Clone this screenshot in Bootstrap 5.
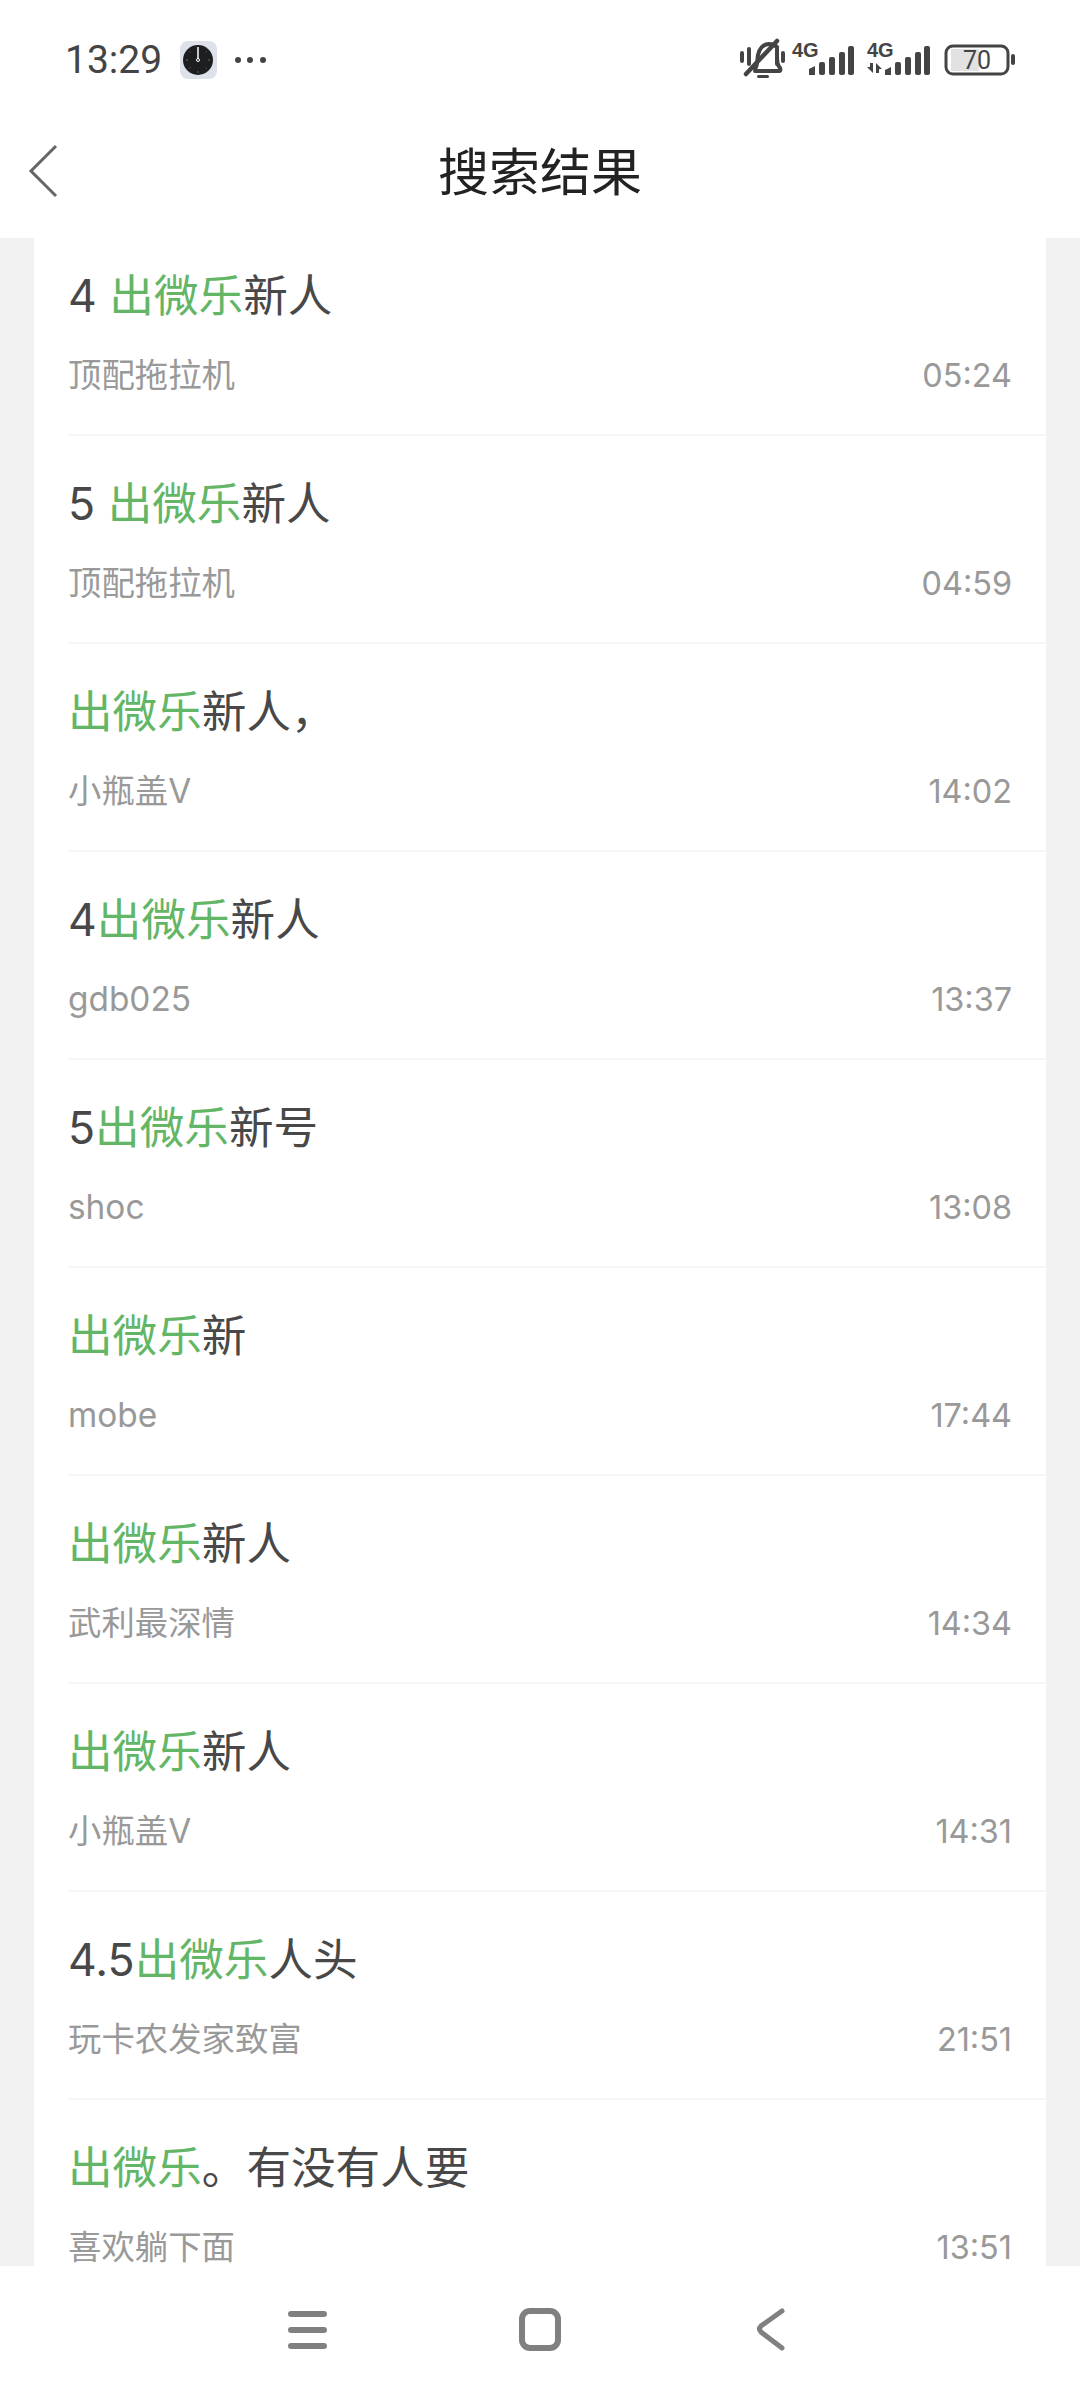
<!DOCTYPE html>
<html lang="zh-CN">

<head>
    <meta charset="UTF-8">
    <meta name="viewport" content="width=device-width, initial-scale=1.0">
    <title>搜索结果</title>
    <link href="https://cdn.jsdelivr.net/npm/bootstrap@5.3.0/dist/css/bootstrap.min.css" rel="stylesheet">
    <style>
        body {
            width: 1080px;
            height: 2400px;
            overflow: hidden;
            background: #fff;
            font-family: Inter, "Noto Sans CJK SC", sans-serif;
        }

        .phone-status {
            height: 120px;
            padding: 0 60px 0 65px;
        }

        .status-time {
            font: 400 39px/1 Roboto, sans-serif;
            color: #444;
            width: 114px;
        }

        .page-head {
            height: 118px;
        }

        .page-head h1 {
            font-size: 51px;
            font-weight: 400;
            color: #222;
            margin: 0 0 19px;
            font-family: "Noto Sans CJK SC", sans-serif;
        }

        .back-btn {
            position: absolute;
            left: 26px;
            top: 23px;
        }

        .result-wrap {
            height: 2028px;
            background: #f2f2f2;
            padding: 0 34px;
            overflow: hidden;
        }

        .result-list {
            margin-top: -10px;
            background: #fff;
            border-radius: 0;
        }

        .result-row {
            height: 208px;
            padding: 0 0 0 34px;
            background: #fff;
            border: 0;
        }

        .result-inner {
            height: 208px;
            padding: 45px 34px 0 0;
            border-bottom: 2px solid #f6f6f6;
        }

        .result-title {
            font-size: 44.6px;
            line-height: 46px;
            color: #484848;
            height: 56px;
        }

        .hl {
            color: #63b666;
        }

        .result-meta {
            margin-top: 28px;
            font-size: 33.4px;
            line-height: 36px;
            color: #999;
        }

        .result-meta .when {
            font-size: 32.4px;
            line-height: 34px;
            margin-top: 2px;
        }

        .bottom-bar {
            height: 134px;
            background: #fff;
        }
    </style>
</head>

<body class="d-flex flex-column">
    <div class="phone-status d-flex align-items-center">
        <span class="status-time">13:29</span>
        <svg width="40" height="40" viewBox="0 0 40 40">
            <rect x="1" y="1" width="37" height="38" rx="8" fill="#dde1ea" />
            <circle cx="19" cy="20" r="15" fill="#1d1e20" />
            <path d="M19 31v2M7 20h2M29 20h2M10.500 11.500l1 1M27.500 11.500l-1 1M10.500 28.500l1-1M27.500 28.500l-1-1" stroke="#666" stroke-width="1" />
            <line x1="19" y1="7" x2="19" y2="20" stroke="#fff" stroke-width="1.5" />
            <circle cx="19" cy="20" r="1.500" fill="#1d1e20" stroke="#fff" />
        </svg>
        <svg width="40" height="10" viewBox="0 0 40 10" class="ms-3">
            <circle cx="3" cy="5" r="3" fill="#444" />
            <circle cx="15" cy="5" r="3" fill="#444" />
            <circle cx="28" cy="5" r="3" fill="#444" />
        </svg>
        <div class="ms-auto">
            <svg width="282" height="44" viewBox="738 38 282 44" class="d-block">
                <!-- muted bell -->
                <g fill="none" stroke="#444" stroke-linecap="round">
                    <path d="M742 53v8M783 53v8" stroke-width="4" />
                    <path d="M749 49v15M777 49v15" stroke-width="4" />
                    <path d="M755 69c3-4 2-9 3-14 1-6 5-11 11-11 3 0 6 1 8 3M777 56c0 5 0 9 3 12 1 2 0 3-1 3h-24" stroke-width="4" />
                    <path d="M746 74l31-33" stroke-width="4.500" />
                </g>
                <rect x="757" y="75" width="12" height="3" rx="1.500" fill="#444" />
                <!-- sim 1 -->
                <text x="792" y="57" font-family="Liberation Sans" font-size="20" font-weight="700" fill="#444">4G</text>
                <g fill="#444">
                    <path d="M809 69l6-3v9h-6z" />
                    <rect x="819" y="62" width="6" height="13" rx="2" />
                    <rect x="829" y="57" width="6" height="18" rx="2" />
                    <rect x="839" y="52" width="6" height="23" rx="2" />
                    <rect x="848" y="46" width="6" height="29" rx="2" />
                </g>
                <!-- sim 2 -->
                <text x="867" y="57" font-family="Liberation Sans" font-size="20" font-weight="700" fill="#444">4G</text>
                <g fill="#444">
                    <path d="M873 63v10l-6-6h3v-4zM876 73V63l6 6h-3v4z" />
                    <path d="M885 70l6-3v8h-6z" />
                    <rect x="895" y="62" width="6" height="13" rx="2" />
                    <rect x="905" y="57" width="6" height="18" rx="2" />
                    <rect x="915" y="52" width="6" height="23" rx="2" />
                    <rect x="924" y="46" width="6" height="29" rx="2" />
                </g>
                <!-- battery -->
                <rect x="946" y="46" width="62" height="28" rx="7" fill="none" stroke="#444" stroke-width="3" />
                <rect x="951" y="49" width="28" height="22" fill="#e2e2e2" />
                <rect x="1011" y="54" width="4" height="11" rx="2" fill="#444" />
                <text x="977" y="69" text-anchor="middle" font-family="Roboto" font-size="25" fill="#444">70</text>
            </svg>
        </div>
    </div>

    <header class="page-head position-relative d-flex align-items-center justify-content-center">
        <svg class="back-btn" width="34" height="56" viewBox="26 143 34 56">
            <path d="M56 146L31 171L56 196" fill="none" stroke="#666" stroke-width="3" />
        </svg>
        <h1>搜索结果</h1>
    </header>

    <main class="result-wrap">
        <ul class="list-group list-group-flush result-list">
            <li class="list-group-item result-row">
                <div class="result-inner">
                    <div class="result-title">4 <span class="hl">出微乐</span>新人</div>
                    <div class="result-meta d-flex justify-content-between"><span>顶配拖拉机</span><span class="when">05:24</span></div>
                </div>
            </li>
            <li class="list-group-item result-row">
                <div class="result-inner">
                    <div class="result-title">5 <span class="hl">出微乐</span>新人</div>
                    <div class="result-meta d-flex justify-content-between"><span>顶配拖拉机</span><span class="when">04:59</span></div>
                </div>
            </li>
            <li class="list-group-item result-row">
                <div class="result-inner">
                    <div class="result-title"><span class="hl">出微乐</span>新人&#65292;</div>
                    <div class="result-meta d-flex justify-content-between"><span>小瓶盖V</span><span class="when">14:02</span></div>
                </div>
            </li>
            <li class="list-group-item result-row">
                <div class="result-inner">
                    <div class="result-title">4<span class="hl">出微乐</span>新人</div>
                    <div class="result-meta d-flex justify-content-between"><span>gdb025</span><span class="when">13:37</span></div>
                </div>
            </li>
            <li class="list-group-item result-row">
                <div class="result-inner">
                    <div class="result-title">5<span class="hl">出微乐</span>新号</div>
                    <div class="result-meta d-flex justify-content-between"><span>shoc</span><span class="when">13:08</span></div>
                </div>
            </li>
            <li class="list-group-item result-row">
                <div class="result-inner">
                    <div class="result-title"><span class="hl">出微乐</span>新</div>
                    <div class="result-meta d-flex justify-content-between"><span>mobe</span><span class="when">17:44</span></div>
                </div>
            </li>
            <li class="list-group-item result-row">
                <div class="result-inner">
                    <div class="result-title"><span class="hl">出微乐</span>新人</div>
                    <div class="result-meta d-flex justify-content-between"><span>武利最深情</span><span class="when">14:34</span></div>
                </div>
            </li>
            <li class="list-group-item result-row">
                <div class="result-inner">
                    <div class="result-title"><span class="hl">出微乐</span>新人</div>
                    <div class="result-meta d-flex justify-content-between"><span>小瓶盖V</span><span class="when">14:31</span></div>
                </div>
            </li>
            <li class="list-group-item result-row">
                <div class="result-inner">
                    <div class="result-title">4.5<span class="hl">出微乐</span>人头</div>
                    <div class="result-meta d-flex justify-content-between"><span>玩卡农发家致富</span><span class="when">21:51</span></div>
                </div>
            </li>
            <li class="list-group-item result-row">
                <div class="result-inner">
                    <div class="result-title"><span class="hl">出微乐</span>。有没有人要</div>
                    <div class="result-meta d-flex justify-content-between"><span>喜欢躺下面</span><span class="when">13:51</span></div>
                </div>
            </li>
        </ul>
    </main>

    <nav class="bottom-bar">
        <svg width="1080" height="134" viewBox="0 2266 1080 134" class="d-block">
            <g fill="#808080">
                <rect x="288" y="2311" width="39" height="6" rx="3" />
                <rect x="288" y="2327" width="39" height="6" rx="3" />
                <rect x="288" y="2343" width="39" height="6" rx="3" />
            </g>
            <rect x="522" y="2311" width="36" height="37" rx="8" fill="none" stroke="#808080" stroke-width="6" />
            <path d="M782 2311L761 2326Q758 2329 761 2332L782 2348" fill="none" stroke="#808080" stroke-width="5" stroke-linecap="round" />
        </svg>
    </nav>

    <script src="https://cdn.jsdelivr.net/npm/bootstrap@5.3.0/dist/js/bootstrap.bundle.min.js"></script>
</body>

</html>
